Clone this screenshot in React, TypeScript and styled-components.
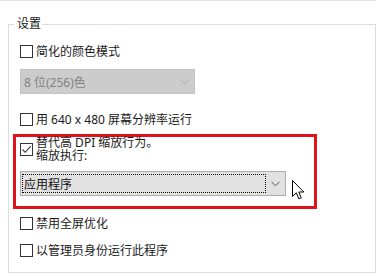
import React from 'react';
import styled, { createGlobalStyle } from 'styled-components';

const Global = createGlobalStyle`
  html, body { margin: 0; padding: 0; background: #ffffff; }
  body {
    font-family: "Noto Sans", "Noto Sans CJK SC", sans-serif;
    font-size: 12px;
    color: #1a1a1a;
  }
`;

const Page = styled.div`
  width: 386px;
  height: 277px;
  overflow: hidden;
  background: #fff;
`;

const TopRule = styled.div`
  width: 376px;
  height: 1px;
  background: #e3e3e3;
`;

const Group = styled.section`
  position: relative;
  box-sizing: border-box;
  margin: 23px 0 0 8px;
  width: 368px;
  height: 249px;
  border: 1px solid #dcdcdc;
  padding: 20px 0 0 11px;
  display: flex;
  flex-direction: column;
  align-items: flex-start;
`;

const Legend = styled.div`
  position: absolute;
  top: -8px;
  left: 5px;
  padding: 0 1px 0 3px;
  background: #fff;
  line-height: 14px;
  height: 14px;
`;

const Row = styled.div<{ $mt?: number }>`
  display: flex;
  align-items: center;
  gap: 3px;
  height: 13px;
  margin-top: ${p => p.$mt ?? 0}px;
  white-space: nowrap;
  line-height: 13px;
`;

const Box = styled.span`
  box-sizing: border-box;
  width: 13px;
  height: 13px;
  flex: none;
  border: 1px solid #333333;
  background: #ffffff;
  display: flex;
  align-items: center;
  justify-content: center;
`;

const Combo = styled.div<{ $w: number; $mt?: number; $disabled?: boolean }>`
  box-sizing: border-box;
  width: ${p => p.$w}px;
  height: 25px;
  margin-top: ${p => p.$mt ?? 0}px;
  display: flex;
  align-items: stretch;
  border: 1px solid ${p => (p.$disabled ? '#c4c4c4' : '#adadad')};
  background: ${p => (p.$disabled ? '#cccccc' : '#e1e1e1')};
  color: ${p => (p.$disabled ? '#838383' : '#111111')};
`;

const ComboText = styled.div<{ $focus?: boolean }>`
  flex: 1;
  display: flex;
  align-items: center;
  box-sizing: border-box;
  margin: ${p => (p.$focus ? '2px 0 2px 1px' : '0')};
  padding-left: ${p => (p.$focus ? '1px' : '3px')};
  border: ${p => (p.$focus ? '1px dotted #000' : 'none')};
  white-space: nowrap;
`;

const ComboArrow = styled.div`
  width: 19px;
  flex: none;
  display: flex;
  align-items: center;
  justify-content: center;
`;

const Highlight = styled.div`
  position: relative;
  box-sizing: border-box;
  width: 304px;
  height: 75px;
  margin: 8px 0 0 -7px;
  border: 3px solid #e0121a;
  padding: 0 0 0 4px;
  display: flex;
  flex-direction: column;
  align-items: flex-start;
`;

const CheckLine = styled.div`
  display: flex;
  align-items: center;
  gap: 3px;
  margin-top: -1px;
`;

const Lines = styled.div`
  display: flex;
  flex-direction: column;
  line-height: 13px;
  white-space: nowrap;
`;

const Cursor = styled.svg`
  position: absolute;
  left: 276px;
  top: 43px;
`;

const Chevron = ({ color }: { color: string }) => (
  <svg width="9" height="6" viewBox="0 0 9 6">
    <path d="M0.5 0.8 L4.5 4.8 L8.5 0.8" fill="none" stroke={color} strokeWidth="1" />
  </svg>
);

const Check = () => (
  <svg width="11" height="11" viewBox="0 0 11 11">
    <path d="M1.5 5.5 L4.2 8.3 L9.6 2.4" fill="none" stroke="#333" strokeWidth="1.1" />
  </svg>
);

export default function App() {
  return (
    <Page>
      <Global />
      <TopRule />
      <Group>
        <Legend>设置</Legend>
        <Row>
          <Box />
          <span>简化的颜色模式</span>
        </Row>
        <Combo $w={175} $mt={11} $disabled>
          <ComboText>8 位(256)色</ComboText>
          <ComboArrow>
            <Chevron color="#a8a8a8" />
          </ComboArrow>
        </Combo>
        <Row $mt={19}>
          <Box />
          <span>用 640 x 480 屏幕分辨率运行</span>
        </Row>
        <Highlight>
          <CheckLine>
            <Box>
              <Check />
            </Box>
            <Lines>
              <span>替代高 DPI 缩放行为。</span>
              <span>缩放执行:</span>
            </Lines>
          </CheckLine>
          <Combo $w={266} $mt={9}>
            <ComboText $focus>应用程序</ComboText>
            <ComboArrow>
              <Chevron color="#555" />
            </ComboArrow>
          </Combo>
          <Cursor width="13" height="20" viewBox="0 0 13 20">
            <path
              d="M0.5 0.5 L0.5 16.5 L4.3 12.8 L6.8 18.8 L9.2 17.8 L6.8 12 L11.8 12 Z"
              fill="#fff"
              stroke="#000"
              strokeWidth="1"
              strokeLinejoin="round"
            />
          </Cursor>
        </Highlight>
        <Row $mt={8}>
          <Box />
          <span>禁用全屏优化</span>
        </Row>
        <Row $mt={14}>
          <Box />
          <span>以管理员身份运行此程序</span>
        </Row>
      </Group>
    </Page>
  );
}
